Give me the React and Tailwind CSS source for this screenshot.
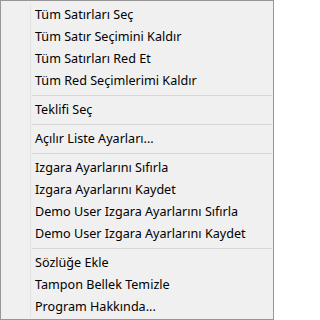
const groups = [
  ["Tüm Satırları Seç", "Tüm Satır Seçimini Kaldır", "Tüm Satırları Red Et", "Tüm Red Seçimlerimi Kaldır"],
  ["Teklifi Seç"],
  ["Açılır Liste Ayarları..."],
  [
    "Izgara Ayarlarını Sıfırla",
    "Izgara Ayarlarını Kaydet",
    "Demo User Izgara Ayarlarını Sıfırla",
    "Demo User Izgara Ayarlarını Kaydet",
  ],
  ["Sözlüğe Ekle", "Tampon Bellek Temizle", "Program Hakkında..."],
];

export default function App() {
  return (
    <div
      className="w-[274px] h-[320px] border border-[#979797] bg-[#f0f0f0] pt-[3px] flex overflow-hidden"
      style={{ fontFamily: '"Noto Sans", "Open Sans", sans-serif' }}
    >
      {/* icon gutter */}
      <div className="w-[30px] shrink-0 border-r border-[#e2e3e3] mb-[2px]" />

      {/* items */}
      <div className="flex-1 flex flex-col pr-[1px]">
        {groups.map((items, gi) => (
          <div key={gi}>
            {gi > 0 && (
              <div className="py-[3px] pl-[1px]">
                <div className="h-px bg-[#d7d7d7]" />
              </div>
            )}
            {items.map((label) => (
              <div
                key={label}
                className="h-[22px] leading-[22px] pl-[4px] text-[12.6px] text-black whitespace-nowrap"
              >
                {label}
              </div>
            ))}
          </div>
        ))}
      </div>
    </div>
  );
}
